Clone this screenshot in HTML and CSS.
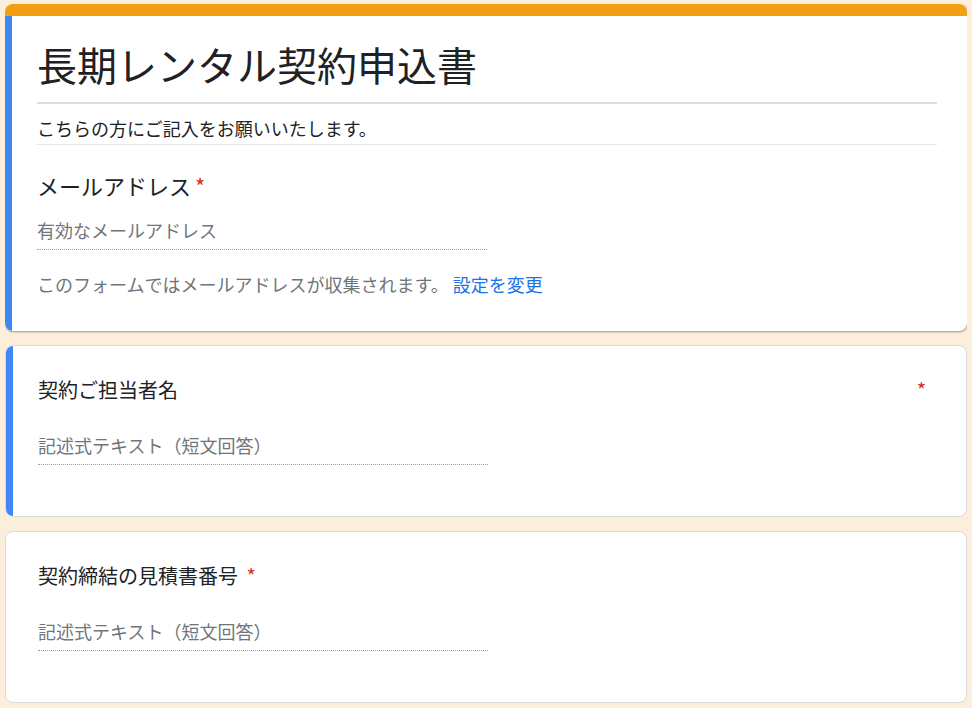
FILE: index.html
```html
<!DOCTYPE html>
<html lang="ja">
<head>
    <meta charset="UTF-8">
    <meta name="viewport" content="width=device-width, initial-scale=1.0">
    <title>長期レンタル契約申込書</title>
    <link rel="stylesheet" href="styles.css">
</head>
<body>
    <div class="card head-card">
        <div class="top-bar"></div>
        <div class="card-body accent">
            <h1 class="form-title">長期レンタル契約申込書</h1>
            <p class="form-desc">こちらの方にご記入をお願いいたします。</p>
            <div class="q-title">メールアドレス<span class="req">*</span></div>
            <div class="answer">有効なメールアドレス</div>
            <p class="note">このフォームではメールアドレスが収集されます。 <a href="#" class="link">設定を変更</a></p>
        </div>
    </div>

    <div class="card">
        <div class="card-body accent question">
            <div class="q-title q-row">
                <span>契約ご担当者名</span>
                <span class="req">*</span>
            </div>
            <div class="answer">記述式テキスト（短文回答）</div>
        </div>
    </div>

    <div class="card">
        <div class="card-body question">
            <div class="q-title">契約締結の見積書番号 <span class="req">*</span></div>
            <div class="answer">記述式テキスト（短文回答）</div>
        </div>
    </div>
</body>
</html>
```

FILE: styles.css
```css
body {
    margin: 4px 5px;
    background-color: #fbeedb;
    font-family: "Noto Sans CJK JP", "Noto Sans", sans-serif;
    color: #202124;
}
.card {
    background: white;
    border: 1px solid #dadce0;
    border-radius: 8px;
    overflow: hidden;
    margin-bottom: 14px;
}
.head-card {
    border: none;
    box-shadow: 0 1px 2px rgba(60, 64, 67, 0.35), 1px 1px 2px rgba(60, 64, 67, 0.2);
}
.top-bar {
    height: 12px;
    background-color: #f39f13;
}
.card-body {
    padding: 22px 30px 34px 32px;
}
.card-body.accent {
    border-left: 7px solid #4285f4;
    padding-left: 25px;
}
.form-title {
    margin: 0;
    font-size: 40px;
    font-weight: 400;
    line-height: 52px;
    padding-bottom: 12px;
    border-bottom: 2px solid #dcdcdc;
}
.form-desc {
    margin: 12px 0 0;
    font-size: 18px;
    line-height: 24px;
    padding-bottom: 4px;
    border-bottom: 1px solid #e6e6e6;
}
.q-title {
    margin-top: 25px;
    font-size: 22px;
    line-height: 30px;
}
.req {
    color: #d93025;
    margin-left: 4px;
}
.answer {
    margin-top: 17px;
    width: 450px;
    font-size: 18px;
    line-height: 26px;
    color: #70757a;
    padding-bottom: 6px;
    border-bottom: 1px dotted #9e9e9e;
}
.note {
    margin: 21px 0 0;
    font-size: 18px;
    line-height: 26px;
    color: #70757a;
}
.link {
    color: #1a73e8;
    text-decoration: none;
}
.question {
    padding-top: 30px;
    padding-bottom: 51px;
}
.question .q-title {
    margin-top: 0;
    font-size: 20px;
    line-height: 28px;
}
.question .answer {
    margin-top: 28px;
}
.q-row {
    display: flex;
    justify-content: space-between;
    padding-right: 10px;
}
```
